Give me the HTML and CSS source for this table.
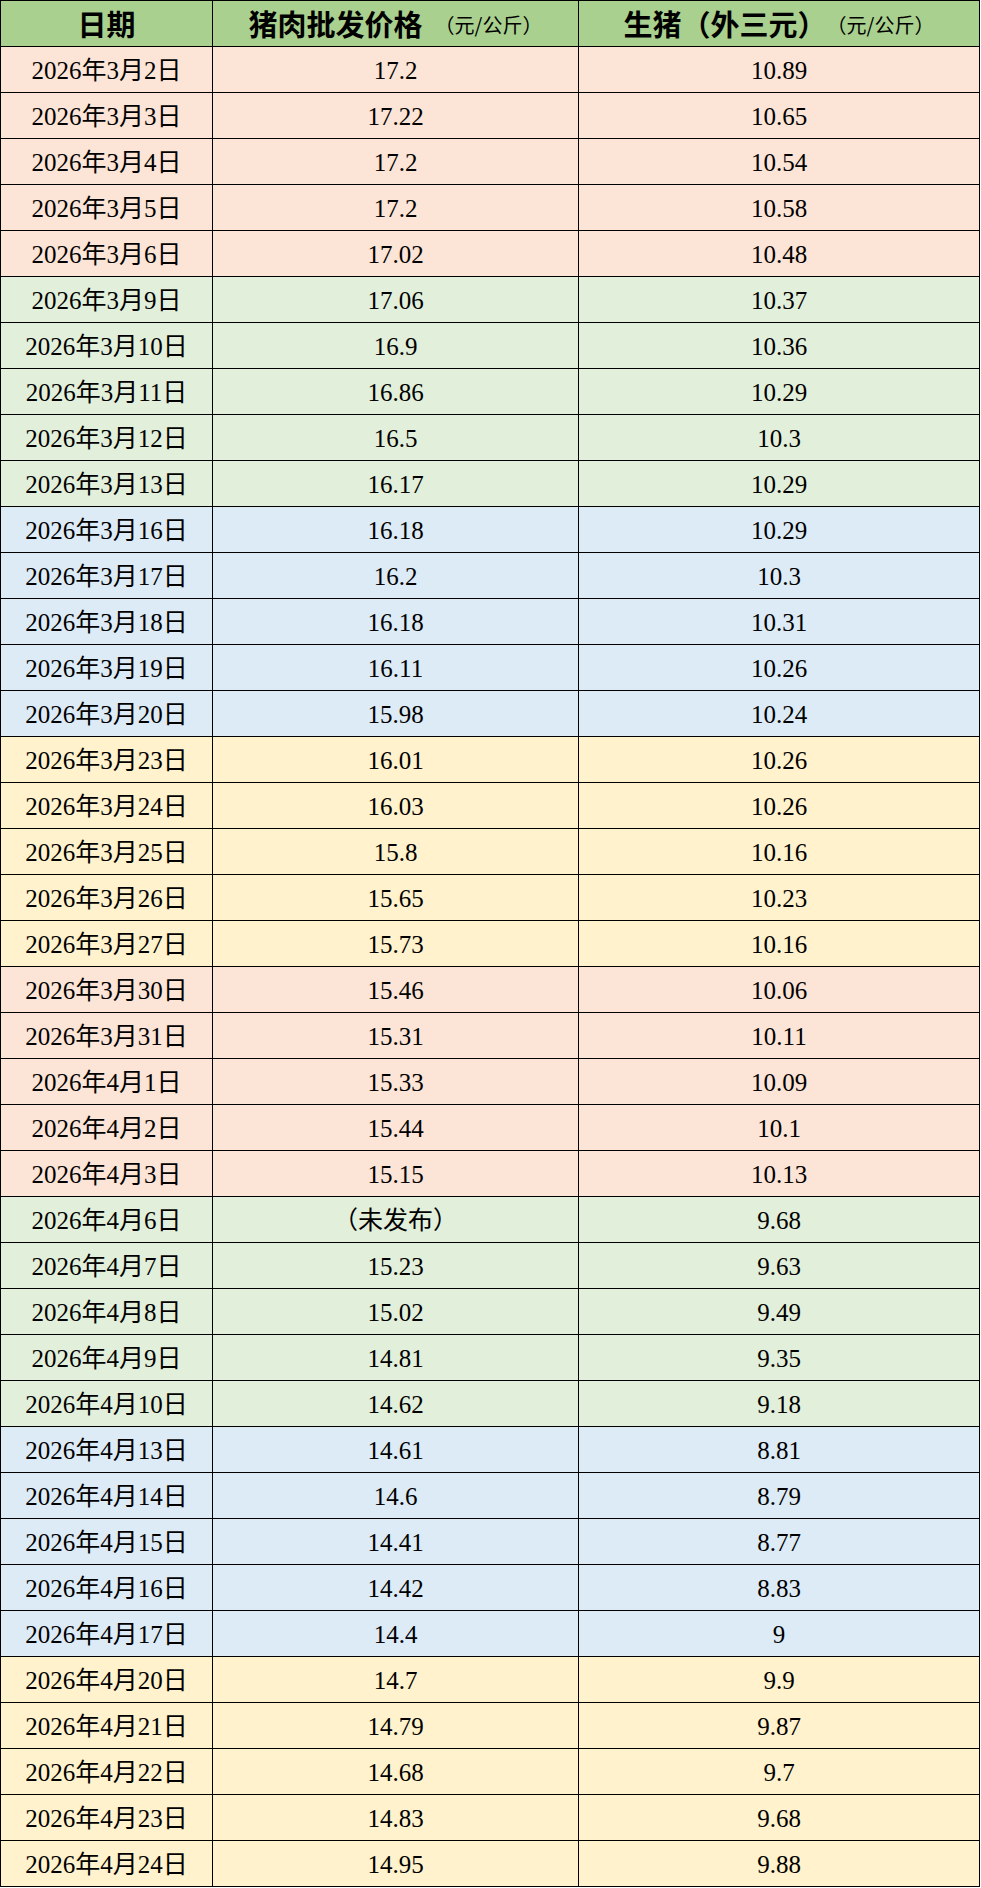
FILE: index.html
```html
<!DOCTYPE html>
<html lang="zh-CN">
<head>
<meta charset="utf-8">
<title>猪肉价格</title>
<link rel="stylesheet" href="styles.css">
</head>
<body>
<div class="sheet">
  <div class="row head">
    <div class="cell">日期</div>
    <div class="cell">猪肉批发价格<span class="unit gap">（元/公斤）</span></div>
    <div class="cell">生猪（外三元）<span class="unit">（元/公斤）</span></div>
  </div>
  <div class="row pink"><div class="cell">2026年3月2日</div><div class="cell">17.2</div><div class="cell">10.89</div></div>
  <div class="row pink"><div class="cell">2026年3月3日</div><div class="cell">17.22</div><div class="cell">10.65</div></div>
  <div class="row pink"><div class="cell">2026年3月4日</div><div class="cell">17.2</div><div class="cell">10.54</div></div>
  <div class="row pink"><div class="cell">2026年3月5日</div><div class="cell">17.2</div><div class="cell">10.58</div></div>
  <div class="row pink"><div class="cell">2026年3月6日</div><div class="cell">17.02</div><div class="cell">10.48</div></div>
  <div class="row green"><div class="cell">2026年3月9日</div><div class="cell">17.06</div><div class="cell">10.37</div></div>
  <div class="row green"><div class="cell">2026年3月10日</div><div class="cell">16.9</div><div class="cell">10.36</div></div>
  <div class="row green"><div class="cell">2026年3月11日</div><div class="cell">16.86</div><div class="cell">10.29</div></div>
  <div class="row green"><div class="cell">2026年3月12日</div><div class="cell">16.5</div><div class="cell">10.3</div></div>
  <div class="row green"><div class="cell">2026年3月13日</div><div class="cell">16.17</div><div class="cell">10.29</div></div>
  <div class="row blue"><div class="cell">2026年3月16日</div><div class="cell">16.18</div><div class="cell">10.29</div></div>
  <div class="row blue"><div class="cell">2026年3月17日</div><div class="cell">16.2</div><div class="cell">10.3</div></div>
  <div class="row blue"><div class="cell">2026年3月18日</div><div class="cell">16.18</div><div class="cell">10.31</div></div>
  <div class="row blue"><div class="cell">2026年3月19日</div><div class="cell">16.11</div><div class="cell">10.26</div></div>
  <div class="row blue"><div class="cell">2026年3月20日</div><div class="cell">15.98</div><div class="cell">10.24</div></div>
  <div class="row yellow"><div class="cell">2026年3月23日</div><div class="cell">16.01</div><div class="cell">10.26</div></div>
  <div class="row yellow"><div class="cell">2026年3月24日</div><div class="cell">16.03</div><div class="cell">10.26</div></div>
  <div class="row yellow"><div class="cell">2026年3月25日</div><div class="cell">15.8</div><div class="cell">10.16</div></div>
  <div class="row yellow"><div class="cell">2026年3月26日</div><div class="cell">15.65</div><div class="cell">10.23</div></div>
  <div class="row yellow"><div class="cell">2026年3月27日</div><div class="cell">15.73</div><div class="cell">10.16</div></div>
  <div class="row pink"><div class="cell">2026年3月30日</div><div class="cell">15.46</div><div class="cell">10.06</div></div>
  <div class="row pink"><div class="cell">2026年3月31日</div><div class="cell">15.31</div><div class="cell">10.11</div></div>
  <div class="row pink"><div class="cell">2026年4月1日</div><div class="cell">15.33</div><div class="cell">10.09</div></div>
  <div class="row pink"><div class="cell">2026年4月2日</div><div class="cell">15.44</div><div class="cell">10.1</div></div>
  <div class="row pink"><div class="cell">2026年4月3日</div><div class="cell">15.15</div><div class="cell">10.13</div></div>
  <div class="row green"><div class="cell">2026年4月6日</div><div class="cell">（未发布）</div><div class="cell">9.68</div></div>
  <div class="row green"><div class="cell">2026年4月7日</div><div class="cell">15.23</div><div class="cell">9.63</div></div>
  <div class="row green"><div class="cell">2026年4月8日</div><div class="cell">15.02</div><div class="cell">9.49</div></div>
  <div class="row green"><div class="cell">2026年4月9日</div><div class="cell">14.81</div><div class="cell">9.35</div></div>
  <div class="row green"><div class="cell">2026年4月10日</div><div class="cell">14.62</div><div class="cell">9.18</div></div>
  <div class="row blue"><div class="cell">2026年4月13日</div><div class="cell">14.61</div><div class="cell">8.81</div></div>
  <div class="row blue"><div class="cell">2026年4月14日</div><div class="cell">14.6</div><div class="cell">8.79</div></div>
  <div class="row blue"><div class="cell">2026年4月15日</div><div class="cell">14.41</div><div class="cell">8.77</div></div>
  <div class="row blue"><div class="cell">2026年4月16日</div><div class="cell">14.42</div><div class="cell">8.83</div></div>
  <div class="row blue"><div class="cell">2026年4月17日</div><div class="cell">14.4</div><div class="cell">9</div></div>
  <div class="row yellow"><div class="cell">2026年4月20日</div><div class="cell">14.7</div><div class="cell">9.9</div></div>
  <div class="row yellow"><div class="cell">2026年4月21日</div><div class="cell">14.79</div><div class="cell">9.87</div></div>
  <div class="row yellow"><div class="cell">2026年4月22日</div><div class="cell">14.68</div><div class="cell">9.7</div></div>
  <div class="row yellow"><div class="cell">2026年4月23日</div><div class="cell">14.83</div><div class="cell">9.68</div></div>
  <div class="row yellow"><div class="cell">2026年4月24日</div><div class="cell">14.95</div><div class="cell">9.88</div></div>
</div>
</body>
</html>
```
FILE: styles.css
```css
html, body {
  margin: 0;
  padding: 0;
  background: #ffffff;
}
body {
  font-family: "Liberation Serif", "Noto Sans CJK SC", serif;
  color: #000000;
}
.sheet {
  width: 980px;
  border-left: 1px solid #000;
  border-top: 1px solid #000;
  box-sizing: border-box;
}
.row {
  display: grid;
  grid-template-columns: 212px 366px 401px;
  height: 46px;
}
.cell {
  box-sizing: border-box;
  border-right: 1px solid #000;
  border-bottom: 1px solid #000;
  display: flex;
  align-items: center;
  justify-content: center;
  font-size: 25px;
  line-height: 1;
  padding-top: 2px;
  white-space: nowrap;
}
.head { background: #a9d08e; }
.head .cell {
  font-family: "Noto Sans CJK SC", sans-serif;
  font-weight: 700;
  font-size: 29px;
  padding-top: 0;
}
.unit {
  font-weight: 400;
  font-size: 20px;
  padding-top: 3px;
}
.gap { margin-left: 12px; }
.pink { background: #fce4d6; }
.green { background: #e2efda; }
.blue { background: #ddebf7; }
.yellow { background: #fff2cc; }
```
